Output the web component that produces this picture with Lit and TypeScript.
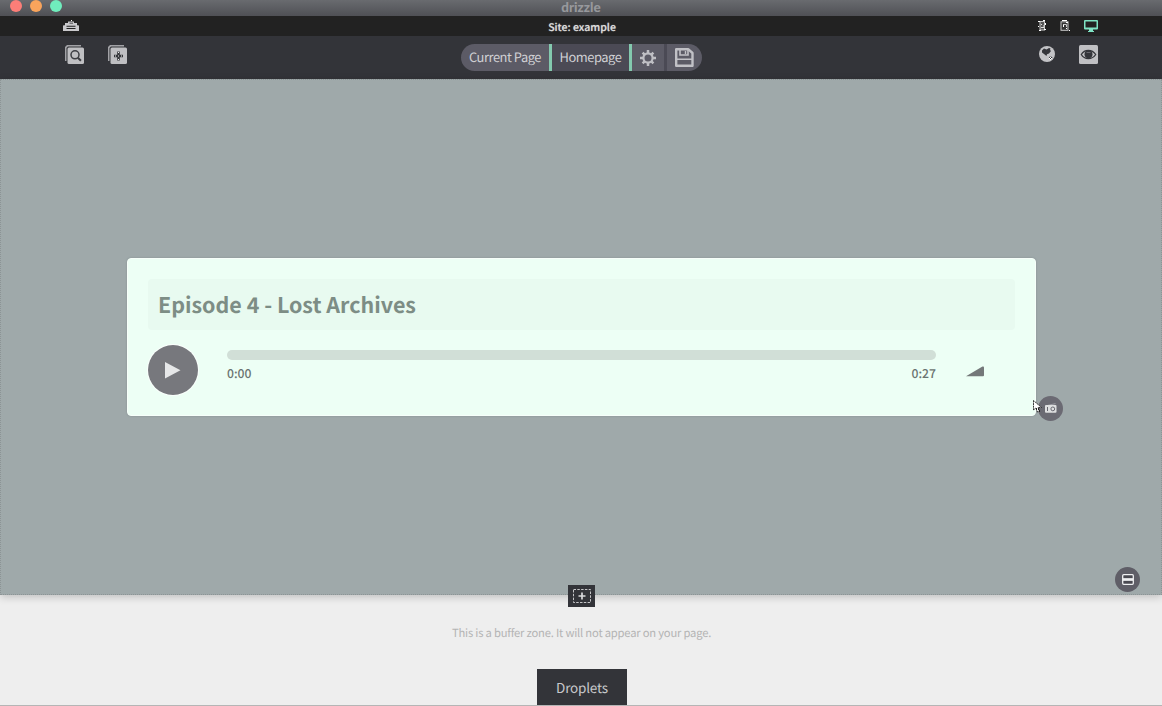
import { LitElement, html, css, svg } from "lit";
import { customElement, property } from "lit/decorators.js";

const icons: Record<string, any> = {
  toolbox: svg`<path fill="#c9c9cc" d="M0 11V6q0-.8.800-.8H2V3h3V1.500h6V3h3v2.200h1.200q.8 0 .8.800v5z"/><path fill="#222" d="M6.500 2.800h3.500V3.500h-3.500zM3.500 5.800h9v1h-9zM3.500 8h9v1h-9z"/><path fill="#fff" d="M8 0h1v1H8z"/>`,
  phone: svg`<rect x="2" y="1.500" width="4.500" height="8.500" fill="#555" stroke="#c8c8c8"/><path stroke="#ddd" d="M3 4.500h1M5 6h1M3 7.500h3"/><path fill="#fff" d="M0 1h2v1H0zM5 0h2v1H5zM7 3h1v2H7zM0 6h1v1H0zM6 9h2v1H6zM1 10h2v1H1z"/>`,
  tablet: svg`<rect x="1" y="1.800" width="7" height="8.500" fill="#333" stroke="#c8c8c8"/><path fill="none" stroke="#c8c8c8" d="M3 4.500h3.500V7"/><path fill="#fff" d="M2 0h5v1H2zM6 2h2v1H6zM3 5h1v2H3zM6 8h1v1H6zM9 10h1v1H9z"/>`,
  monitor: svg`<path fill="#7fe3c4" fill-rule="evenodd" d="M1 0h12q1 0 1 1v7.500q0 1-1 1H9V11h1v1H4v-1h1V9.500H1q-1 0-1-1V1q0-1 1-1zM1.500 1.500v6h11v-6z"/>`,
  search: svg`<path fill="#a2a2a6" d="M2 0h14v1.500H3L1.500 3v13H0V2z"/><rect x="2.500" y="2.500" width="16.500" height="16.500" rx="1.500" fill="#bfbfc2"/><circle cx="10" cy="9.800" r="4" fill="none" stroke="#3d3e43" stroke-width="1.500"/><path stroke="#3d3e43" stroke-width="2" d="m12.900 12.700 3 3"/>`,
  add: svg`<path fill="#a2a2a6" d="M2 0h14v1.500H3L1.500 3v13H0V2z"/><rect x="2.500" y="2.500" width="16.500" height="16.500" rx="1.500" fill="#bfbfc2"/><path stroke="#35363a" stroke-width="2.600" d="M10.500 6.500v9M6 11h9"/><path fill="#eee" d="M10 7h1v1h-1zM10 14h1v1h-1zM7 10.500h1v1H7zM13 10.500h1v1h-1zM10 10.500h1v1h-1z"/>`,
  globe: svg`<circle cx="8" cy="8" r="8" fill="#c3c3c6"/><path fill="#34353a" d="M3 4.500 5 2.500l2.500 1L10 2l1.500.500-.500 1.500 1 1-2 2.500-2 .800L7.500 10 5 8 3 6.500z"/><path fill="#34353a" d="m10 11 2-.500 1.500 1-1.500 2-1.500-.500z"/><path fill="#fff" d="M10 12h1v1h-1zM11 13h1v1h-1zM12 12h1v1h-1zM11 11h1v1h-1z"/>`,
  eye: svg`<rect width="19" height="19" rx="1.500" fill="#c0c0c3"/><path fill="none" stroke="#34353a" stroke-width="1.300" d="M2.300 9.500C5.500 4 13 4 16.700 9.500 13 15 5.500 15 2.300 9.500z"/><circle cx="9.500" cy="9.300" r="4" fill="#34353a"/><path stroke="#66666c" d="M7.500 7.500h4"/>`,
  gear: svg`<g stroke="#bfbfc4" stroke-width="2.500"><path d="M8 0v4M8 12v4M0 8h4M12 8h4M2.600 2.600l2.500 2.500M10.900 10.900l2.500 2.500M13.400 2.600l-2.500 2.500M5.100 10.900l-2.500 2.500"/></g><circle cx="8" cy="8" r="4.600" fill="#5c5b66" stroke="#bfbfc4" stroke-width="2.200"/>`,
  save: svg`<path fill="none" stroke="#c1c1c6" stroke-width="2.400" stroke-linejoin="round" d="M1.200 1.200h12L17.500 5v12.800H1.200z"/><path fill="none" stroke="#c1c1c6" stroke-width="1.600" d="M5 1v6h8V1M1 11.200h16.500"/><path fill="#c1c1c6" d="M9.800 3h1.400v3H9.800z"/>`,
  play: svg`<path fill="#e6e7e8" d="M0 0 15.500 8.300 0 16.500z"/>`,
  volume: svg`<path fill="#747879" d="M0 10.200 16.500.500Q18 0 18 1.500v7.700q0 1-1 1z"/>`,
  radio: svg`<path fill="none" stroke="#aaa9b0" stroke-width=".8" d="M3 2.300 10.500.700"/><rect y="2" width="11.500" height="7.700" rx="1" fill="#dedee0"/><circle cx="7.800" cy="5.900" r="1.900" fill="none" stroke="#67666f"/><path stroke="#67666f" d="M2.500 4v4"/>`,
  rows: svg`<rect x=".7" y=".7" width="10.600" height="9.600" rx="1" fill="#4a4951" stroke="#f0f0f2" stroke-width="1.300"/><path stroke="#f0f0f2" stroke-width="2.700" d="M1 5.500h10"/>`,
  insert: svg`<rect x=".5" y=".5" width="17" height="13" fill="none" stroke="#c6c6c8" stroke-dasharray="2.500 1.300"/><path stroke="#dadadc" stroke-width="1.700" d="M9 3.500v7M5.500 7h7"/>`,
  cursor: svg`<path fill="#fff" stroke="#222" stroke-width=".9" stroke-dasharray="2 .6" d="M.500.500v9.500l2.300-2 1.700 4 2-.900L5 7.500h3.500z"/><path fill="#222" d="M3 8h1v2H3zM5 8h1v2H5zM6 10h1v2H6z"/>`,
};

@customElement("ui-icon")
class UiIcon extends LitElement {
  @property() name = "";
  @property({ type: Number }) w = 16;
  @property({ type: Number }) h = 16;
  static styles = css`:host { display: block; flex: none; line-height: 0; } svg { display: block; overflow: visible; }`;
  render() {
    return html`<svg width=${this.w} height=${this.h} viewBox="0 0 ${this.w} ${this.h}">${icons[this.name]}</svg>`;
  }
}

@customElement("audio-card")
class AudioCard extends LitElement {
  static styles = css`
    :host { display: block; position: relative; box-sizing: border-box; width: 909px; height: 158px; padding: 20px;
      border-radius: 4px; background: #edfff5; border: 1px solid #f7fffa;
      box-shadow: 0 0 2px rgba(70, 85, 85, .3); }
    .title { height: 51px; line-height: 52px; padding: 0 10px; border-radius: 4px; background: #e8faf0;
      color: #7d8d85; font-size: 21.450px; font-weight: 700; }
    .player { display: flex; margin-top: 15px; }
    .play { width: 50px; height: 50px; border-radius: 50%; background: #77787d; display: flex; align-items: center;
      justify-content: center; box-shadow: 0 0 0 1px #fafffc; }
    .track { width: 709px; margin-left: 29px; padding-top: 5px; }
    .bar { height: 10px; border-radius: 5px; background: #d1dfd7; }
    .times { display: flex; justify-content: space-between; color: #6b7471; font-size: 12.200px; line-height: 20px;
      margin-top: 3px; font-weight: 500; }
    .volume { margin: 21px 0 0 30px; }
    .badge { position: absolute; left: 910px; top: 137px; width: 25px; height: 25px; border-radius: 50%;
      background: #6b6a73; display: flex; align-items: center; justify-content: center; }
    .cursor { position: absolute; left: 905px; top: 141px; }
  `;
  render() {
    return html`
      <div class="title">Episode 4 - Lost Archives</div>
      <div class="player">
        <div class="play"><ui-icon name="play" w="16" h="17"></ui-icon></div>
        <div class="track">
          <div class="bar"></div>
          <div class="times"><span>0:00</span><span>0:27</span></div>
        </div>
        <ui-icon class="volume" name="volume" w="18" h="11"></ui-icon>
      </div>
      <div class="badge"><ui-icon name="radio" w="12" h="11"></ui-icon></div>
      <ui-icon class="cursor" name="cursor" w="9" h="13"></ui-icon>
    `;
  }
}

@customElement("app-root")
class AppRoot extends LitElement {
  static styles = css`
    :host { display: flex; flex-direction: column; width: 1162px; height: 706px; overflow: hidden; box-sizing: border-box;
      position: relative; background: #eee; font-family: "Noto Sans CJK SC", "Noto Sans", sans-serif;
      text-rendering: geometricPrecision; }
    .titlebar { display: grid; grid-template-columns: 1fr auto 1fr; height: 16px; flex: none;
      background: linear-gradient(#696b6f, #4f5055); }
    .lights { display: flex; gap: 8px; padding-left: 10px; }
    .light { width: 12px; height: 12px; border-radius: 50%; }
    .red { background: #fc7e78; } .orange { background: #f9a45c; } .green { background: #70edbd; }
    .brand { color: #97989c; font: 900 13.500px/14px "Lato", sans-serif; }
    .sitebar { display: grid; grid-template-columns: 1fr auto 1fr; height: 20px; flex: none; background: #222; }
    .tool { margin: 4px 0 0 63px; }
    .site { color: #dcdcdc; font-size: 10.500px; line-height: 23px; font-weight: 500; text-shadow: 0 0 1px #aaa;
      margin-left: 2px; }
    .devices { display: flex; justify-content: flex-end; gap: 14px; padding: 4px 64px 0 0; }
    .toolbar { display: grid; grid-template-columns: 1fr auto 1fr; height: 43px; flex: none; background: #333439; }
    .left { display: flex; gap: 24px; padding: 9px 0 0 65px; }
    .right { display: flex; justify-content: flex-end; gap: 24px; padding: 9px 64px 0 0; }
    .pill { display: flex; height: 27px; margin-top: 8px; border-radius: 14px; overflow: hidden; background: #5c5b66;
      color: #d0d0d4; font-size: 12.900px; letter-spacing: -.46px; line-height: 25px; }
    .seg { box-sizing: border-box; display: flex; align-items: center; justify-content: center; white-space: nowrap; }
    .label { padding: 0 0 2px 1px; }
    .current { width: 91px; border-right: 3px solid #83c9ae; }
    .home { width: 80px; background: #4b4a55; border-right: 3px solid #83c9ae; }
    .settings { width: 35px; border-right: 3px solid #4b4a55; }
    .save { width: 35px; }
    .right .globe { margin-top: 1px; }
    .stage { height: 516px; flex: none; box-sizing: border-box; position: relative; background: #9fa9aa;
      border: 1px dotted #8c9495; padding: 178px 0 0 126px; box-shadow: 0 2px 8px rgba(0, 0, 0, .2); }
    .section { position: absolute; left: 1114px; top: 487px; width: 25px; height: 25px; border-radius: 50%;
      background: #5f5e67; display: flex; align-items: center; justify-content: center; }
    .insert { position: absolute; left: 567px; top: 505px; width: 27px; height: 22px; background: #333439;
      display: flex; align-items: center; justify-content: center; }
    .buffer { flex: 1; display: flex; flex-direction: column; align-items: center; justify-content: space-between;
      border-bottom: 1px solid #b5b5b5; }
    .note { color: #b4b4b4; font-size: 11.200px; letter-spacing: -.19px; line-height: 20px; margin-top: 28px;
      padding-left: 1px; white-space: nowrap; }
    .droplets { width: 90px; height: 36px; line-height: 37px; text-align: center; background: #333439;
      color: #c8c8cb; font-size: 13.500px; letter-spacing: -.2px; margin-left: 2px; }
  `;
  render() {
    return html`
      <header class="titlebar">
        <div class="lights"><i class="light red"></i><i class="light orange"></i><i class="light green"></i></div>
        <div class="brand">drizzle</div><div></div>
      </header>
      <div class="sitebar">
        <ui-icon class="tool" name="toolbox" w="16" h="12"></ui-icon>
        <div class="site">Site: example</div>
        <div class="devices">
          <ui-icon name="phone" w="8" h="12"></ui-icon>
          <ui-icon name="tablet" w="10" h="12"></ui-icon>
          <ui-icon name="monitor" w="14" h="13"></ui-icon>
        </div>
      </div>
      <nav class="toolbar">
        <div class="left">
          <ui-icon name="search" w="19" h="19"></ui-icon>
          <ui-icon name="add" w="19" h="19"></ui-icon>
        </div>
        <div class="pill">
          <div class="seg label current">Current Page</div>
          <div class="seg label home">Homepage</div>
          <div class="seg settings"><ui-icon name="gear" w="16" h="16"></ui-icon></div>
          <div class="seg save"><ui-icon name="save" w="19" h="19"></ui-icon></div>
        </div>
        <div class="right">
          <ui-icon class="globe" name="globe" w="16" h="16"></ui-icon>
          <ui-icon name="eye" w="19" h="19"></ui-icon>
        </div>
      </nav>
      <main class="stage">
        <audio-card></audio-card>
        <div class="section"><ui-icon name="rows" w="12" h="11"></ui-icon></div>
        <div class="insert"><ui-icon name="insert" w="18" h="14"></ui-icon></div>
      </main>
      <footer class="buffer">
        <div class="note">This is a buffer zone. It will not appear on your page.</div>
        <div class="droplets">Droplets</div>
      </footer>
    `;
  }
}
